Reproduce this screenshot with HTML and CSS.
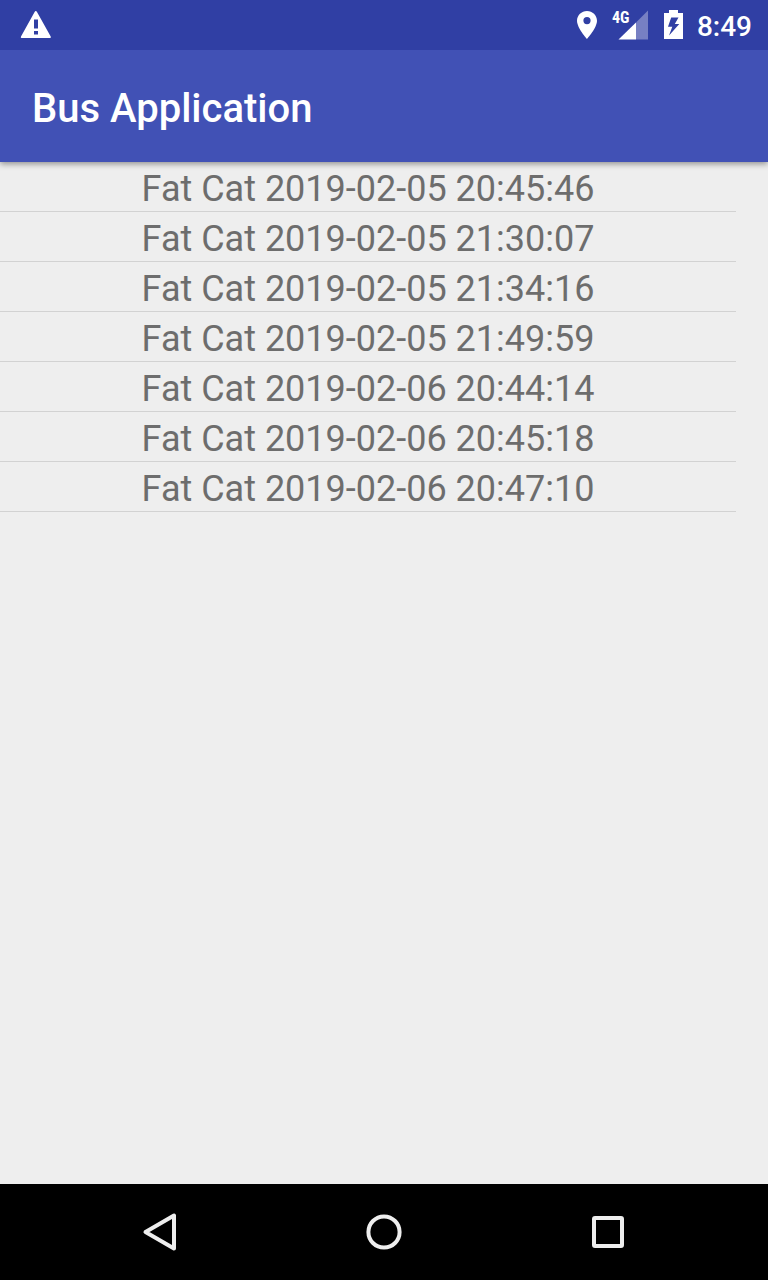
FILE: index.html
```html
<!DOCTYPE html>
<html lang="en">
<head>
<meta charset="utf-8">
<meta name="viewport" content="width=device-width, initial-scale=1">
<title>Bus Application</title>
<link rel="stylesheet" href="styles.css">
</head>
<body>
<div class="status-bar">
  <svg class="status-icon" width="32" height="50" viewBox="20 0 32 50" role="img" aria-label="Warning">
    <path fill="#fff" fill-rule="evenodd" d="M35.8 11 Q36.5 11 37 12 L50.7 36.5 Q51.3 38 50 38 H21.7 Q20.3 38 21 36.5 L34.6 12 Q35.1 11 35.8 11 Z M34 19.5 V28.5 H38 V19.5 Z M34 31 V34.5 H38 V31 Z"/>
  </svg>
  <div class="status-right">
    <svg class="status-icon" width="20" height="50" viewBox="577 0 20 50" role="img" aria-label="Location">
      <path fill="#fff" fill-rule="evenodd" d="M587 11 C581.5 11 577 15.300 577 20.800 C577 28 587 39 587 39 C587 39 597 28 597 20.800 C597 15.300 592.500 11 587 11 Z M587 17 A3.600 3.600 0 1 1 587 24.200 A3.600 3.600 0 1 1 587 17 Z"/>
    </svg>
    <div class="signal">
      <svg class="status-icon" width="36" height="50" viewBox="612 0 36 50" role="img" aria-label="Signal">
        <path fill="#7780c3" d="M636 22.500 L648 10.500 V39.500 H636 Z"/>
        <path fill="#fff" d="M618.500 39.500 L636 22.500 V39.500 Z"/>
      </svg>
      <span class="network">4G</span>
    </div>
    <svg class="status-icon" width="20" height="50" viewBox="664 0 20 50" role="img" aria-label="Battery charging">
      <path fill="#fff" fill-rule="evenodd" d="M669 10 H678 V13 H683 V39 H664 V13 H669 Z M671.200 17.500 L668 26.700 H672.300 L669 35.500 L679.300 24 H674.800 L678.500 17.500 Z"/>
    </svg>
    <time class="clock">8:49</time>
  </div>
</div>
<header class="app-bar"><h1 class="title">Bus Application</h1></header>
<main class="content">
  <ul class="trips">
    <li class="trip">Fat Cat 2019-02-05 20:45:46</li>
    <li class="trip">Fat Cat 2019-02-05 21:30:07</li>
    <li class="trip">Fat Cat 2019-02-05 21:34:16</li>
    <li class="trip">Fat Cat 2019-02-05 21:49:59</li>
    <li class="trip">Fat Cat 2019-02-06 20:44:14</li>
    <li class="trip">Fat Cat 2019-02-06 20:45:18</li>
    <li class="trip">Fat Cat 2019-02-06 20:47:10</li>
  </ul>
</main>
<nav class="nav-bar" aria-label="System navigation">
  <button class="nav-button" type="button" aria-label="Back">
    <svg width="48" height="48" viewBox="136 1208 48 48"><path d="M174 1215.500 V1248.500 L145.500 1232 Z"/></svg>
  </button>
  <button class="nav-button" type="button" aria-label="Home">
    <svg width="48" height="48" viewBox="0 0 48 48"><circle cx="24" cy="24" r="15.600"/></svg>
  </button>
  <button class="nav-button" type="button" aria-label="Overview">
    <svg width="48" height="48" viewBox="0 0 48 48"><rect x="10" y="10" width="28" height="28" rx="1"/></svg>
  </button>
</nav>
</body>
</html>
```

FILE: styles.css
```css
* {
  box-sizing: border-box;
}

body {
  margin: 0;
  min-height: 100vh;
  display: flex;
  flex-direction: column;
  background: #eeeeee;
  font-family: Roboto, "Liberation Sans", sans-serif;
}

.status-bar {
  position: relative;
  z-index: 2;
  height: 50px;
  padding: 0 16px 0 20px;
  display: flex;
  justify-content: space-between;
  align-items: center;
  background: #303fa4;
  color: #fff;
}

.status-right {
  display: flex;
  align-items: center;
}

.status-icon {
  display: block;
}

.signal {
  position: relative;
  margin: 0 16px 0 15px;
}

.network {
  position: absolute;
  left: 0;
  top: 10px;
  font-family: "Roboto Condensed", Roboto, sans-serif;
  font-size: 16px;
  font-weight: 700;
  line-height: 16px;
}

.clock {
  margin-left: 13px;
  padding-top: 4px;
  font-size: 28px;
  font-weight: 500;
  line-height: 32px;
}

.app-bar {
  position: relative;
  z-index: 1;
  height: 112px;
  padding: 6px 32px 0;
  display: flex;
  align-items: center;
  background: #4151b5;
  color: #fff;
  box-shadow: 0 2px 6px rgba(0, 0, 0, 0.4);
}

.title {
  margin: 0;
  font-size: 40px;
  font-weight: 500;
  line-height: 48px;
}

.content {
  flex: 1;
  padding-right: 32px;
}

.trips {
  margin: 0;
  padding: 0;
  list-style: none;
}

.trip {
  padding-top: 6px;
  border-bottom: 1px solid #d2d2d2;
  color: #6d6d6d;
  font-size: 36px;
  line-height: 43px;
  text-align: center;
}

.nav-bar {
  height: 96px;
  display: flex;
  justify-content: center;
  align-items: center;
  gap: 64px;
  background: #000;
}

.nav-button {
  width: 160px;
  height: 96px;
  padding: 0;
  display: flex;
  justify-content: center;
  align-items: center;
  border: 0;
  background: transparent;
}

.nav-button svg {
  fill: none;
  stroke: #eeeeee;
  stroke-width: 4;
  stroke-linejoin: round;
}
```
